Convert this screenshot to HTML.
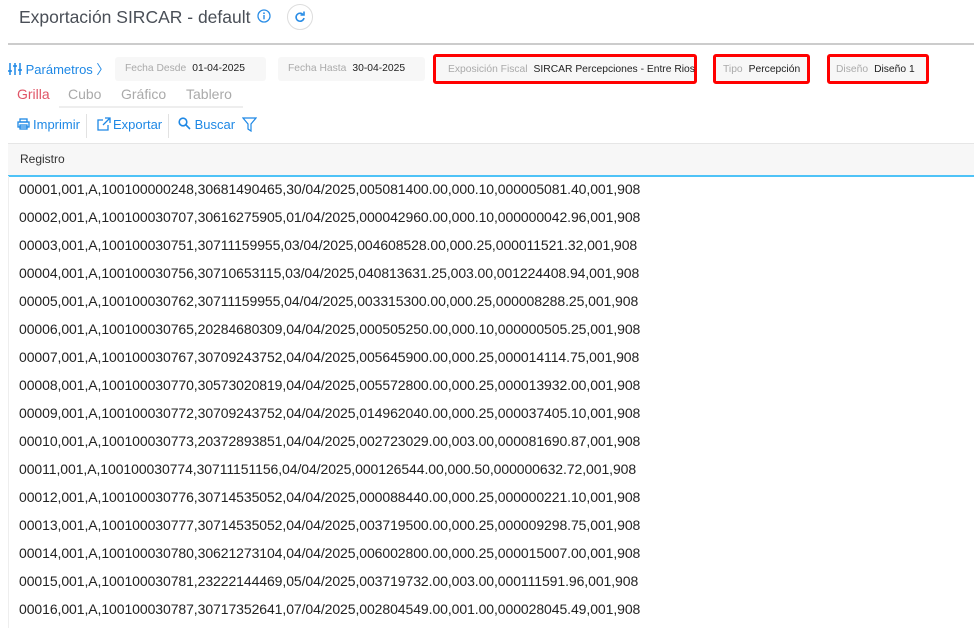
<!DOCTYPE html>
<html><head><meta charset="utf-8"><style>
body{margin:0;width:974px;height:628px;overflow:hidden;background:#fff;font-family:"Liberation Sans",sans-serif;position:relative}
.a{position:absolute;white-space:nowrap}
.title{left:19px;top:7px;font-size:17.5px;color:#4a4f57}
.field{position:absolute;top:57px;height:24px;background:#f7f7f7;border-radius:3px;font-size:10.3px;line-height:24px;color:#222;white-space:nowrap}
.field span{color:#aaa;margin-right:6px}
.red{border:3px solid #f00;box-sizing:border-box;background:#f7f7f7;line-height:26px}
.tabs{top:86px;font-size:14px;color:#aaa}
.tool{top:117px;font-size:13px;color:#1e88e5}
.row{left:19px;font-size:14px;color:#222;letter-spacing:-0.08px}
</style></head><body>
<div class="a title">Exportación SIRCAR - default <svg width="14" height="14" viewBox="0 0 14 14" style="vertical-align:0px;margin-left:2px"><circle cx="7" cy="7" r="6" fill="none" stroke="#2a8de6" stroke-width="1.3"/><rect x="6.3" y="6" width="1.4" height="4.3" fill="#2a8de6"/><circle cx="7" cy="4.2" r=".9" fill="#2a8de6"/></svg></div>
<div class="a" style="left:287px;top:4px;width:26px;height:26px;border:1px solid #ddd;border-radius:50%;box-sizing:border-box"><svg width="24" height="24" viewBox="0 0 24 24"><path d="M15 9.5A4 4 0 1 0 16 13" fill="none" stroke="#2a8de6" stroke-width="1.6"/><path d="M16 6.5v3.5h-3.5" fill="none" stroke="#2a8de6" stroke-width="1.6"/></svg></div>
<div class="a" style="left:8px;top:43px;width:966px;height:2px;background:#ccc"></div>
<div class="a" style="left:8px;top:59px;font-size:13px;color:#1e88e5"><svg width="14" height="14" viewBox="0 0 14 14" style="vertical-align:-2px"><g stroke="#1e88e5" stroke-width="1.5"><path d="M2 1v12M7 1v12M12 1v12"/><path d="M0 9h4M5 4h4M10 8h4"/></g></svg> Parámetros 〉</div>
<div class="field" style="left:115px;width:151px;padding-left:10px;box-sizing:border-box"><span>Fecha Desde</span>01-04-2025</div>
<div class="field" style="left:278px;width:147px;padding-left:10px;box-sizing:border-box"><span>Fecha Hasta</span>30-04-2025</div>
<div class="field red" style="left:433px;top:54px;height:30px;width:264px;padding-left:12px"><span>Exposición Fiscal</span>SIRCAR Percepciones - Entre Rios</div>
<div class="field red" style="left:713px;top:54px;height:30px;width:97px;padding-left:7px"><span>Tipo</span>Percepción</div>
<div class="field red" style="left:827px;top:54px;height:30px;width:102px;padding-left:6px"><span>Diseño</span>Diseño 1</div>
<div class="a tabs" style="left:17px;color:#e05567">Grilla</div>
<div class="a tabs" style="left:68px">Cubo</div>
<div class="a tabs" style="left:121px">Gráfico</div>
<div class="a tabs" style="left:186px">Tablero</div>
<div class="a" style="left:59px;top:106px;width:184px;height:2px;background:#eee"></div>
<div class="a tool" style="left:17px"><svg width="13" height="12" viewBox="0 0 13 12" style="vertical-align:-1px;margin-right:3px"><g fill="none" stroke="#1e88e5" stroke-width="1.3"><rect x="3" y="1" width="7" height="3"/><rect x="1" y="4" width="11" height="5"/><rect x="3" y="7" width="7" height="4"/></g></svg>Imprimir</div>
<div class="a" style="left:86px;top:114px;width:1px;height:24px;background:#e2e2e2"></div>
<div class="a tool" style="left:97px"><svg width="14" height="14" viewBox="0 0 14 14" style="vertical-align:-2px;margin-right:2px"><g fill="none" stroke="#1e88e5" stroke-width="1.3"><path d="M6 3H1v10h10V8"/><path d="M8 1h5v5M13 1L6 8"/></g></svg>Exportar</div>
<div class="a" style="left:168px;top:114px;width:1px;height:24px;background:#e2e2e2"></div>
<div class="a tool" style="left:178px"><svg width="13" height="13" viewBox="0 0 13 13" style="vertical-align:-1px"><g fill="none" stroke="#1e88e5" stroke-width="1.6"><circle cx="5" cy="5" r="3.8"/><path d="M8 8l4 4"/></g></svg> Buscar</div>
<div class="a" style="left:242px;top:117px"><svg width="15" height="15" viewBox="0 0 15 15"><path d="M1 1h13L9 7v7L6 12V7z" fill="none" stroke="#1e88e5" stroke-width="1.2"/></svg></div>
<div class="a" style="left:8px;top:143px;width:966px;height:31px;background:#f7f7f7;border-top:1px solid #e6e6e6;border-bottom:2px solid #4fc3f7"></div>
<div class="a" style="left:20px;top:152px;font-size:12px;color:#333">Registro</div>
<div class="a" style="left:8px;top:176px;width:1px;height:452px;background:#eee"></div>
<div class="a row" style="top:181px">00001,001,A,100100000248,30681490465,30/04/2025,005081400.00,000.10,000005081.40,001,908</div>
<div class="a row" style="top:209px">00002,001,A,100100030707,30616275905,01/04/2025,000042960.00,000.10,000000042.96,001,908</div>
<div class="a row" style="top:237px">00003,001,A,100100030751,30711159955,03/04/2025,004608528.00,000.25,000011521.32,001,908</div>
<div class="a row" style="top:265px">00004,001,A,100100030756,30710653115,03/04/2025,040813631.25,003.00,001224408.94,001,908</div>
<div class="a row" style="top:293px">00005,001,A,100100030762,30711159955,04/04/2025,003315300.00,000.25,000008288.25,001,908</div>
<div class="a row" style="top:321px">00006,001,A,100100030765,20284680309,04/04/2025,000505250.00,000.10,000000505.25,001,908</div>
<div class="a row" style="top:349px">00007,001,A,100100030767,30709243752,04/04/2025,005645900.00,000.25,000014114.75,001,908</div>
<div class="a row" style="top:377px">00008,001,A,100100030770,30573020819,04/04/2025,005572800.00,000.25,000013932.00,001,908</div>
<div class="a row" style="top:405px">00009,001,A,100100030772,30709243752,04/04/2025,014962040.00,000.25,000037405.10,001,908</div>
<div class="a row" style="top:433px">00010,001,A,100100030773,20372893851,04/04/2025,002723029.00,003.00,000081690.87,001,908</div>
<div class="a row" style="top:461px">00011,001,A,100100030774,30711151156,04/04/2025,000126544.00,000.50,000000632.72,001,908</div>
<div class="a row" style="top:489px">00012,001,A,100100030776,30714535052,04/04/2025,000088440.00,000.25,000000221.10,001,908</div>
<div class="a row" style="top:517px">00013,001,A,100100030777,30714535052,04/04/2025,003719500.00,000.25,000009298.75,001,908</div>
<div class="a row" style="top:545px">00014,001,A,100100030780,30621273104,04/04/2025,006002800.00,000.25,000015007.00,001,908</div>
<div class="a row" style="top:573px">00015,001,A,100100030781,23222144469,05/04/2025,003719732.00,003.00,000111591.96,001,908</div>
<div class="a row" style="top:601px">00016,001,A,100100030787,30717352641,07/04/2025,002804549.00,001.00,000028045.49,001,908</div>
</body></html>
